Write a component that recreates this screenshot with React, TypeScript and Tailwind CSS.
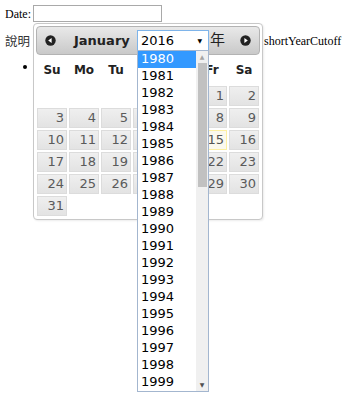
import React from 'react';

const dayNames = ['Su', 'Mo', 'Tu', 'We', 'Th', 'Fr', 'Sa'];

const cells: (number | null)[] = [
  null, null, null, null, null, 1, 2,
  ...Array.from({ length: 29 }, (_, i) => i + 3),
];

const years = Array.from({ length: 20 }, (_, i) => 1980 + i);

function CircleArrow({ dir }: { dir: 'left' | 'right' }) {
  return (
    <svg width="11" height="11" viewBox="0 0 11 11">
      <circle cx="5.5" cy="5.5" r="5.2" fill="#222" />
      {dir === 'left' ? (
        <polygon points="3.2,5.5 6.6,2.9 6.6,8.1" fill="#fff" />
      ) : (
        <polygon points="7.8,5.5 4.4,2.9 4.4,8.1" fill="#fff" />
      )}
    </svg>
  );
}

function YearSelect() {
  return (
    <div className="relative w-[72px] h-[22px]">
      <div className="h-full w-full border border-[#7eb4ea] bg-white flex items-center pl-[3px] text-[13px] text-black">
        2016
        <span className="ml-auto mr-[6px] text-[6px] leading-none">▼</span>
      </div>
      {/* open dropdown */}
      <div className="absolute left-0 top-[20px] w-[72px] h-[342px] border border-[#a3b6cf] bg-white z-20 flex">
        <div className="flex-1 flex flex-col">
          {years.map((y) => (
            <div
              key={y}
              className={
                y === 1980
                  ? 'h-[17px] pl-[3px] flex items-center text-[13px] bg-[#3399ff] text-white'
                  : 'h-[17px] pl-[3px] flex items-center text-[13px] text-black'
              }
            >
              {y}
            </div>
          ))}
        </div>
        <div className="w-[12px] bg-[#f0f0f0] flex flex-col items-center">
          <div className="h-[12px] flex items-center justify-center text-[6px] text-[#a3a3a3]">▲</div>
          <div className="w-[9px] h-[124px] bg-[#c1c1c1]" />
          <div className="flex-1" />
          <div className="h-[12px] flex items-center justify-center text-[6px] text-[#505050]">▼</div>
        </div>
      </div>
    </div>
  );
}

function DatePicker() {
  return (
    <div className="absolute left-[33px] top-[23px] w-[230px] h-[197px] border border-[#c8c8c8] rounded-[4px] bg-white p-[2px] font-['DejaVu_Sans','Noto_Sans_CJK_TC',sans-serif] z-10 shadow-[1px_1px_2px_rgba(0,0,0,0.08)]">
      <div className="h-[29px] rounded-[4px] border border-[#b3b3b3] bg-gradient-to-b from-[#e9e9e9] to-[#c9c9c9] flex items-center">
        <div className="ml-[8px] flex">
          <CircleArrow dir="left" />
        </div>
        <span className="ml-[18px] w-[63px] text-[13px] font-bold text-[#222]">January</span>
        <YearSelect />
        <span className="ml-[1px] text-[15px] text-[#222] leading-none">年</span>
        <div className="ml-auto mr-[8px] flex">
          <CircleArrow dir="right" />
        </div>
      </div>
      <div className="grid grid-cols-7 w-[224px]">
        {dayNames.map((d) => (
          <div key={d} className="h-[30px] flex items-center justify-center text-[12px] font-bold text-[#222]">
            {d}
          </div>
        ))}
        {cells.map((n, i) => (
          <div key={i} className="h-[22px] px-[1px] py-[1px]">
            {n !== null && (
              <div
                className={
                  n === 15
                    ? 'h-full border border-[#fcefa1] bg-[#fbf9ee] text-[#555] text-[13px] flex items-center justify-end pr-[2px]'
                    : 'h-full border border-[#dcdcdc] bg-gradient-to-b from-[#efefef] to-[#e3e3e3] text-[#5a5a5a] text-[13px] flex items-center justify-end pr-[2px]'
                }
              >
                {n}
              </div>
            )}
          </div>
        ))}
      </div>
    </div>
  );
}

export default function App() {
  return (
    <div className="relative w-[360px] h-[400px] bg-white overflow-hidden text-[12px] text-black font-['Liberation_Serif','Noto_Sans_CJK_TC',serif]">
      <div className="flex items-center pl-[5px] pt-[5px] h-[22px]">
        <span className="w-[28px]">Date:</span>
        <input
          type="text"
          className="w-[129px] h-[17px] border border-[#a9a9a9] bg-white outline-none"
        />
      </div>
      <div className="flex items-center pl-[5px] h-[38px]">
        <span className="w-[259px] font-['Noto_Sans_CJK_TC',sans-serif] text-[12.5px] text-[#333]">說明</span>
        <span>shortYearCutoff</span>
      </div>
      <div className="flex items-center h-[14px]">
        <span className="ml-[23px] w-[4px] h-[4px] rounded-full bg-black" />
      </div>
      <DatePicker />
    </div>
  );
}
